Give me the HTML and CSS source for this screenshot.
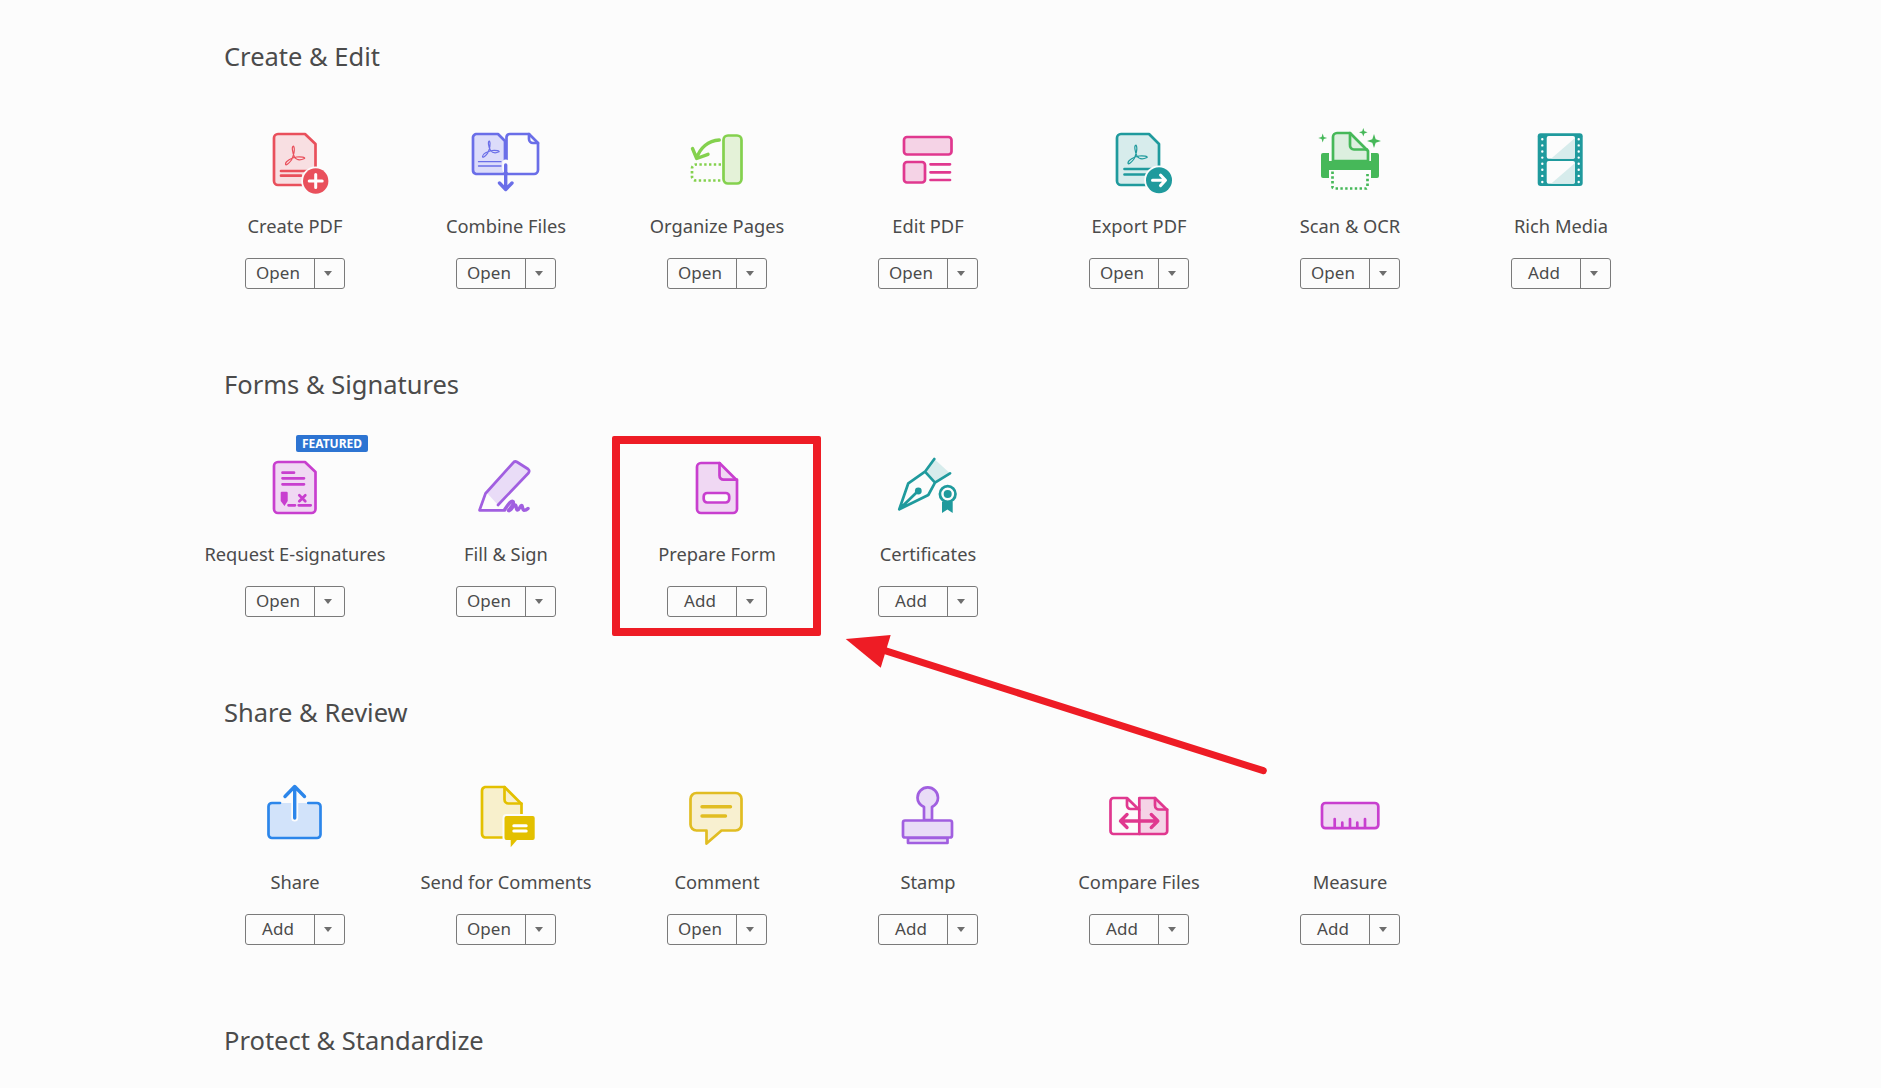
FILE: index.html
```html
<!DOCTYPE html>
<html>

<head>
  <title>Tools</title>
  <link rel="stylesheet" href="styles.css">
</head>

<body>
  <section class="group">
    <h2>Create &amp; Edit</h2>
    <div class="tools">
      <div class="tool">
        <svg class="icon red" viewBox="0 0 72 72">
          <path class="t" d="M19 7H46L56.5 17V54A4 4 0 0 1 52.5 58H19A4 4 0 0 1 15 54V11A4 4 0 0 1 19 7Z"/>
          <path class="thin" d="M34.5 19c-2.200 0-1 7 1 11 2 3 6 3.500 10 1.500 1-1-3-2-8-1.500-5 1-11 4-11 7 0 2 3 0 6-4 2-4 4-11 2-14z"/>
          <path class="l" d="M22 44H49M22 48.700H42"/>
          <circle class="halo" cx="56.700" cy="54" r="14.500"/>
          <circle class="s" cx="56.700" cy="54" r="12.700"/>
          <path class="w" d="M56.700 47.500V60.500M50.200 54H63.200"/>
        </svg>
        <div class="name">Create PDF</div>
        <div class="split"><button class="main">Open</button><button class="more"></button></div>
      </div>
      <div class="tool">
        <svg class="icon indigo" viewBox="0 0 72 72">
          <path class="t" d="M6 7H28L35 14V47H6A4 4 0 0 1 3 43V10A4 4 0 0 1 6 7Z"/>
          <path class="thin" d="M19.500 14c-2 0-1 6 1 9.500 2 2.500 5 3 8.500 1.300 .8-.8-2.500-1.700-7-1.300-4.300 .8-9.500 3.400-9.500 6 0 1.700 2.600 0 5.200-3.400 1.700-3.400 3.400-9.500 1.800-12.100z"/>
          <path class="l thin-l" d="M8.500 34.700H31M8.500 39H31"/>
          <path class="l" d="M40 7H59L68 16V43A4 4 0 0 1 64 47H36.500V10A3.500 3.500 0 0 1 40 7Z"/>
          <path class="l" d="M59 7V12A4 4 0 0 0 63 16H68"/>
          <path class="halo-line" d="M35.700 36V42"/>
          <path class="l heavy" d="M35.700 38V62M29.500 56L35.700 62.500L42 56"/>
        </svg>
        <div class="name">Combine Files</div>
        <div class="split"><button class="main">Open</button><button class="more"></button></div>
      </div>
      <div class="tool">
        <svg class="icon green" viewBox="0 0 72 72">
          <rect class="t" x="42.500" y="8.500" width="18" height="48" rx="4.500"/>
          <path class="d" d="M40 37.500H15A4 4 0 0 0 11 41.500V49.500A4 4 0 0 0 15 53.500H40"/>
          <path class="l heavy" d="M38.300 13C27 13.500 19 21 15.700 31M11.500 21.500L15.700 31.500L27 27.300"/>
        </svg>
        <div class="name">Organize Pages</div>
        <div class="split"><button class="main">Open</button><button class="more"></button></div>
      </div>
      <div class="tool">
        <svg class="icon pink" viewBox="0 0 72 72">
          <rect class="t" x="12" y="10" width="47.500" height="17.500" rx="3"/>
          <rect class="t" x="12" y="35" width="21" height="20.500" rx="3"/>
          <path class="l" d="M38.500 37.300H58M38.500 45.300H58M38.500 53H58"/>
        </svg>
        <div class="name">Edit PDF</div>
        <div class="split"><button class="main">Open</button><button class="more"></button></div>
      </div>
      <div class="tool">
        <svg class="icon teal" viewBox="0 0 72 72">
          <path class="t" d="M18 7H46L56 17V54A4 4 0 0 1 52 58H18A4 4 0 0 1 14 54V11A4 4 0 0 1 18 7Z"/>
          <path class="thin" d="M33 18c-2.200 0-1 7 1 11 2 3 6 3.500 10 1.500 1-1-3-2-8-1.500-5 1-11 4-11 7 0 2 3 0 6-4 2-4 4-11 2-14z"/>
          <path class="l" d="M21.500 42H48M21.500 47.500H42"/>
          <circle class="halo" cx="56" cy="53.300" r="14.800"/>
          <circle class="s" cx="56" cy="53.300" r="13"/>
          <path class="w" d="M49.500 53.300H62M57.500 48L62.500 53.300L57.500 58.600"/>
        </svg>
        <div class="name">Export PDF</div>
        <div class="split"><button class="main">Open</button><button class="more"></button></div>
      </div>
      <div class="tool">
        <svg class="icon grass" viewBox="0 0 72 72">
          <path class="t" d="M19 34V10A4 4 0 0 1 23 6H36L54 24V34Z"/>
          <path class="l" d="M36 6V18A4 4 0 0 0 40 22.500H53"/>
          <path class="s" d="M9 26H15V34H57V26H63A2 2 0 0 1 65 28V49A2 2 0 0 1 63 51H57V43H15V51H9A2 2 0 0 1 7 49V28A2 2 0 0 1 9 26Z"/>
          <path class="d" d="M18.500 44.500V60A1.500 1.500 0 0 0 20 61.500H52A1.500 1.500 0 0 0 53.500 60V44.500"/>
          <path class="s" d="M8.700 6.500L9.800 9.900L13.200 11L9.800 12.100L8.700 15.500L7.600 12.100L4.200 11L7.600 9.900Z"/>
          <path class="s" d="M49.300 1L50.400 4.200L53.600 5.300L50.400 6.400L49.300 9.600L48.200 6.400L45 5.300L48.200 4.200Z"/>
          <path class="s" d="M60 7L61.700 12.300L67 14L61.700 15.700L60 21L58.300 15.700L53 14L58.300 12.300Z"/>
        </svg>
        <div class="name">Scan &amp; OCR</div>
        <div class="split"><button class="main">Open</button><button class="more"></button></div>
      </div>
      <div class="tool">
        <svg class="icon teal" viewBox="0 0 72 72">
          <rect class="s" x="12.700" y="6.300" width="45" height="52.700" rx="3"/>
          <rect class="blank" x="21.700" y="9" width="28.300" height="22.700" rx="2"/>
          <rect class="blank" x="21.700" y="34" width="28.300" height="22.700" rx="2"/>
          <path class="tint" d="M50 11V29.700A2 2 0 0 1 48 31.700H26Z"/>
          <path class="tint" d="M50 36V54.700A2 2 0 0 1 48 56.700H26Z"/>
          <path class="dots" d="M17.300 12.300V55M53.700 12.300V55"/>
        </svg>
        <div class="name">Rich Media</div>
        <div class="split"><button class="main">Add</button><button class="more"></button></div>
      </div>
    </div>
  </section>

  <section class="group">
    <h2>Forms &amp; Signatures</h2>
    <div class="tools">
      <div class="tool">
        <span class="badge">FEATURED</span>
        <svg class="icon purple" viewBox="0 0 72 72">
          <path class="t" d="M19 7H46L56.500 17V54A4 4 0 0 1 52.500 58H19A4 4 0 0 1 15 54V11A4 4 0 0 1 19 7Z"/>
          <path class="l" d="M23.500 17.700H35M23.500 23.300H45M23.500 29.300H45M29.500 50.300H36M39.700 50.300H51.700"/>
          <path class="s" d="M23 36.700H27.500A1.200 1.200 0 0 1 28.700 38V46L25.500 51L21.700 46V38A1.200 1.200 0 0 1 23 36.700Z"/>
          <path class="l" d="M40.300 40.300L46.300 46.300M46.300 40.300L40.300 46.300"/>
        </svg>
        <div class="name">Request E-signatures</div>
        <div class="split"><button class="main">Open</button><button class="more"></button></div>
      </div>
      <div class="tool">
        <svg class="icon violet" viewBox="0 0 72 72">
          <path class="tint" d="M17 38L43 8A3 3 0 0 1 47 7L58 14A3 3 0 0 1 58.500 18L28 50Z"/>
          <path class="l" d="M35 55.300H9.500L15.500 38.500L43 8A3 3 0 0 1 47 7L58 14A3 3 0 0 1 58.500 18L28 50"/>
          <path class="l heavy" d="M35 54C38 50 41 45 43 46.500C45 48.500 39 55 38.500 55.500C41 57 43 50 45 50C47 50 45.500 55 47.500 55C49.500 55 50 50.500 51.500 50.500C53 50.500 52 55 54 55.300C55.500 55.300 57 54.500 58 53.500"/>
        </svg>
        <div class="name">Fill &amp; Sign</div>
        <div class="split"><button class="main">Open</button><button class="more"></button></div>
      </div>
      <div class="tool">
        <svg class="icon purple" viewBox="0 0 72 72">
          <path class="t" d="M20 8H38.500L56 25.500V54A4 4 0 0 1 52 58H20A4 4 0 0 1 16 54V12A4 4 0 0 1 20 8Z"/>
          <path class="l" d="M38.500 8V20.500A4 4 0 0 0 42.500 24.700H56"/>
          <rect class="blank-l" x="22.700" y="38" width="25.500" height="9.500" rx="3.500"/>
        </svg>
        <div class="name">Prepare Form</div>
        <div class="split"><button class="main">Add</button><button class="more"></button></div>
      </div>
      <div class="tool">
        <svg class="icon teal" viewBox="0 0 72 72">
          <path class="tint" d="M33 16.700L42.300 4L58 18.300L43 27.700Z"/>
          <path class="l" d="M42.300 4L33 16.700L43 27.700L58 18.300M7.300 54.300L16.300 28.300L33 16.700M7.300 54.300L36.300 40L43 27.700M7.300 54.300L24 38"/>
          <circle class="s" cx="26.300" cy="36" r="3.400"/>
          <circle class="l" cx="55.700" cy="39" r="7.800"/>
          <circle class="s" cx="55.700" cy="39" r="4"/>
          <path class="s" d="M50 46.500H60.700V58L55.400 54.500L50 58Z"/>
        </svg>
        <div class="name">Certificates</div>
        <div class="split"><button class="main">Add</button><button class="more"></button></div>
      </div>
    </div>
  </section>

  <section class="group">
    <h2>Share &amp; Review</h2>
    <div class="tools">
      <div class="tool">
        <svg class="icon blue" viewBox="0 0 72 72">
          <rect class="tint" x="9.500" y="20" width="52" height="35" rx="3.500"/>
          <path class="l" d="M21 20H13A3.500 3.500 0 0 0 9.500 23.500V51.500A3.500 3.500 0 0 0 13 55H58A3.500 3.500 0 0 0 61.500 51.500V23.500A3.500 3.500 0 0 0 58 20H49.300"/>
          <path class="halo-line" d="M35.700 14V35"/>
          <path class="l heavy" d="M35.700 4V35M26 13.500L35.700 3.500L45.500 13.500"/>
        </svg>
        <div class="name">Share</div>
        <div class="split"><button class="main">Add</button><button class="more"></button></div>
      </div>
      <div class="tool">
        <svg class="icon yellow" viewBox="0 0 72 72">
          <path class="t" d="M15 4H34.500L51.500 21V50.500A4 4 0 0 1 47.500 54.500H15A4 4 0 0 1 12 50.500V8A4 4 0 0 1 15 4Z"/>
          <path class="l" d="M34.500 4V16.500A4 4 0 0 0 38.500 20.500H51.500"/>
          <rect class="halo" x="32.500" y="31" width="34" height="28" rx="4"/>
          <path class="s" d="M36.500 33H62.700A2 2 0 0 1 64.700 35V55A2 2 0 0 1 62.700 57H47L40.700 64.300V57H36.500A2 2 0 0 1 34.500 55V35A2 2 0 0 1 36.500 33Z"/>
          <path class="w" d="M43.800 42.700H56.200M43.800 48H56.200"/>
        </svg>
        <div class="name">Send for Comments</div>
        <div class="split"><button class="main">Open</button><button class="more"></button></div>
      </div>
      <div class="tool">
        <svg class="icon gold" viewBox="0 0 72 72">
          <path class="t" d="M15.500 10H54.500A6 6 0 0 1 60.500 16V41.500A6 6 0 0 1 54.500 47.500H40.500L25.500 60.500V47.500H15.500A6 6 0 0 1 9.500 41.500V16A6 6 0 0 1 15.500 10Z"/>
          <path class="l heavy" d="M21 23.700H49.500M21 33H44.500"/>
        </svg>
        <div class="name">Comment</div>
        <div class="split"><button class="main">Open</button><button class="more"></button></div>
      </div>
      <div class="tool">
        <svg class="icon violet" viewBox="0 0 72 72">
          <path class="t" d="M16 55H55.500V60H16Z"/>
          <path class="t" d="M32 37V24C27 21.500 25.500 18 25.500 14.700A10.200 10.200 0 0 1 46 14.700C46 18 44.500 21.500 40 24V37Z"/>
          <rect class="t" x="11" y="37.500" width="49" height="17" rx="2"/>
        </svg>
        <div class="name">Stamp</div>
        <div class="split"><button class="main">Add</button><button class="more"></button></div>
      </div>
      <div class="tool">
        <svg class="icon pink" viewBox="0 0 72 72">
          <path class="t" d="M36.300 15H52L64.200 27V48A3 3 0 0 1 61.200 51H36.300Z"/>
          <path class="l" d="M36.300 51H10.500A3 3 0 0 1 7.500 48V18A3 3 0 0 1 10.500 15H24L36.300 27M24 15V22.500A3.500 3.500 0 0 0 27.500 26H36"/>
          <path class="l" d="M52 15V22.500A4 4 0 0 0 56 26.500H64.200"/>
          <path class="l heavy" d="M17.500 38H54.800M24 31.500L17.500 38L24 44.500M48.300 31.500L54.800 38L48.300 44.500"/>
        </svg>
        <div class="name">Compare Files</div>
        <div class="split"><button class="main">Add</button><button class="more"></button></div>
      </div>
      <div class="tool">
        <svg class="icon purple" viewBox="0 0 72 72">
          <rect class="t" x="8" y="20" width="56.300" height="25.200" rx="3.500"/>
          <path class="l" d="M20.700 44V36M28.300 44V39.700M36 44V36M43.300 44V39.700M51 44V36"/>
        </svg>
        <div class="name">Measure</div>
        <div class="split"><button class="main">Add</button><button class="more"></button></div>
      </div>
    </div>
  </section>

  <section class="group">
    <h2>Protect &amp; Standardize</h2>
  </section>

  <div class="callout"></div>
  <svg class="pointer" viewBox="0 0 1881 1088">
    <path d="M1263.300 770.700L885 650.700"/>
    <polygon points="845.700,639 890.700,635 880.700,667.700"/>
  </svg>
</body>

</html>
```

FILE: styles.css
```css
html,
body {
  margin: 0;
  background-color: #fcfcfc;
}

body {
  position: relative;
  height: 1088px;
  font-family: "Noto Sans", sans-serif;
  color: #4b4b4b;
}

.group {
  height: 328px;
  box-sizing: border-box;
  padding: 36px 0 0 189.5px;
}

.group:last-of-type {
  height: auto;
}

h2 {
  margin: 0 0 0 34.5px;
  font-size: 25.5px;
  font-weight: 400;
  line-height: 40px;
}

.tools {
  display: grid;
  grid-template-columns: repeat(7, 211px);
  margin-top: 51px;
}

.tool {
  position: relative;
  display: flex;
  flex-direction: column;
  align-items: center;
}

.name {
  margin-top: 14px;
  font-size: 18.3px;
  line-height: 26px;
  white-space: nowrap;
}

.split {
  display: flex;
  width: 100px;
  height: 31px;
  margin-top: 19px;
  box-sizing: border-box;
  border: 1px solid #7a7a7a;
  border-radius: 3px;
}

.split button {
  padding: 0;
  border: none;
  background: none;
  font: inherit;
  color: #4b4b4b;
}

.split .main {
  width: 69px;
  padding: 0 4px 2px 0;
  font-size: 17px;
  line-height: 26px;
  border-right: 1px solid #7a7a7a;
}

.more {
  flex: 1;
  position: relative;
}

.more::after {
  content: "";
  position: absolute;
  left: 9px;
  top: 12px;
  border-left: 4px solid transparent;
  border-right: 4px solid transparent;
  border-top: 5px solid #6e6e6e;
}

.badge {
  position: absolute;
  left: 106.5px;
  top: -20px;
  width: 72px;
  height: 17px;
  border-radius: 2px;
  background-color: #2d74d2;
  color: white;
  font-size: 12px;
  font-weight: 700;
  line-height: 17px;
  text-align: center;
}

/* icons */
.icon {
  display: block;
  width: 72px;
  height: 72px;
  overflow: visible;
}

.red { --line: #e9505c; --tint: #f8dfe2; }
.indigo { --line: #6a6ee8; --tint: #dcdcfa; }
.green { --line: #84d14e; --tint: #e4f2d8; }
.pink { --line: #e0388f; --tint: #f5d3e6; }
.teal { --line: #1f9a9d; --tint: #d7ecec; }
.grass { --line: #46b859; --tint: #dcefdf; }
.purple { --line: #c83fcf; --tint: #f0d8f3; }
.violet { --line: #a15fe0; --tint: #e9dcf7; }
.blue { --line: #2c86ea; --tint: #d2e3fa; }
.yellow { --line: #e3c000; --tint: #f8f0cc; }
.gold { --line: #e1bd22; --tint: #f8f0d0; }

.icon .t,
.icon .l,
.icon .thin,
.icon .w,
.icon .halo-line,
.icon .blank-l {
  stroke-width: 2.7;
  stroke-linecap: round;
  stroke-linejoin: round;
}

.icon .t { fill: var(--tint); stroke: var(--line); }
.icon .l { fill: none; stroke: var(--line); }
.icon .s { fill: var(--line); }
.icon .tint { fill: var(--tint); }
.icon .blank { fill: #fcfcfc; }
.icon .blank-l { fill: #fcfcfc; stroke: var(--line); }
.icon .halo { fill: #fcfcfc; }
.icon .halo-line { fill: none; stroke: #fcfcfc; stroke-width: 7; }
.icon .thin { fill: none; stroke: var(--line); stroke-width: 1.2; }
.icon .thin-l { stroke-width: 1.3; }
.icon .heavy { stroke-width: 3.4; }
.icon .w { fill: none; stroke: white; stroke-width: 3; }

.icon .d {
  fill: none;
  stroke: var(--line);
  stroke-width: 2.7;
  stroke-dasharray: 2.4 2.4;
}

.icon .dots {
  fill: none;
  stroke: white;
  stroke-width: 2.4;
  stroke-linecap: round;
  stroke-dasharray: 0 6.1;
}

/* red annotation on top of the page */
.callout {
  position: absolute;
  left: 612px;
  top: 436px;
  width: 209px;
  height: 200px;
  box-sizing: border-box;
  border: 8px solid #ee1c25;
  border-radius: 2px;
}

.pointer {
  position: absolute;
  left: 0;
  top: 0;
  width: 1881px;
  height: 1088px;
  pointer-events: none;
}

.pointer path {
  fill: none;
  stroke: #ee1c25;
  stroke-width: 7;
  stroke-linecap: round;
}

.pointer polygon {
  fill: #ee1c25;
}
```
